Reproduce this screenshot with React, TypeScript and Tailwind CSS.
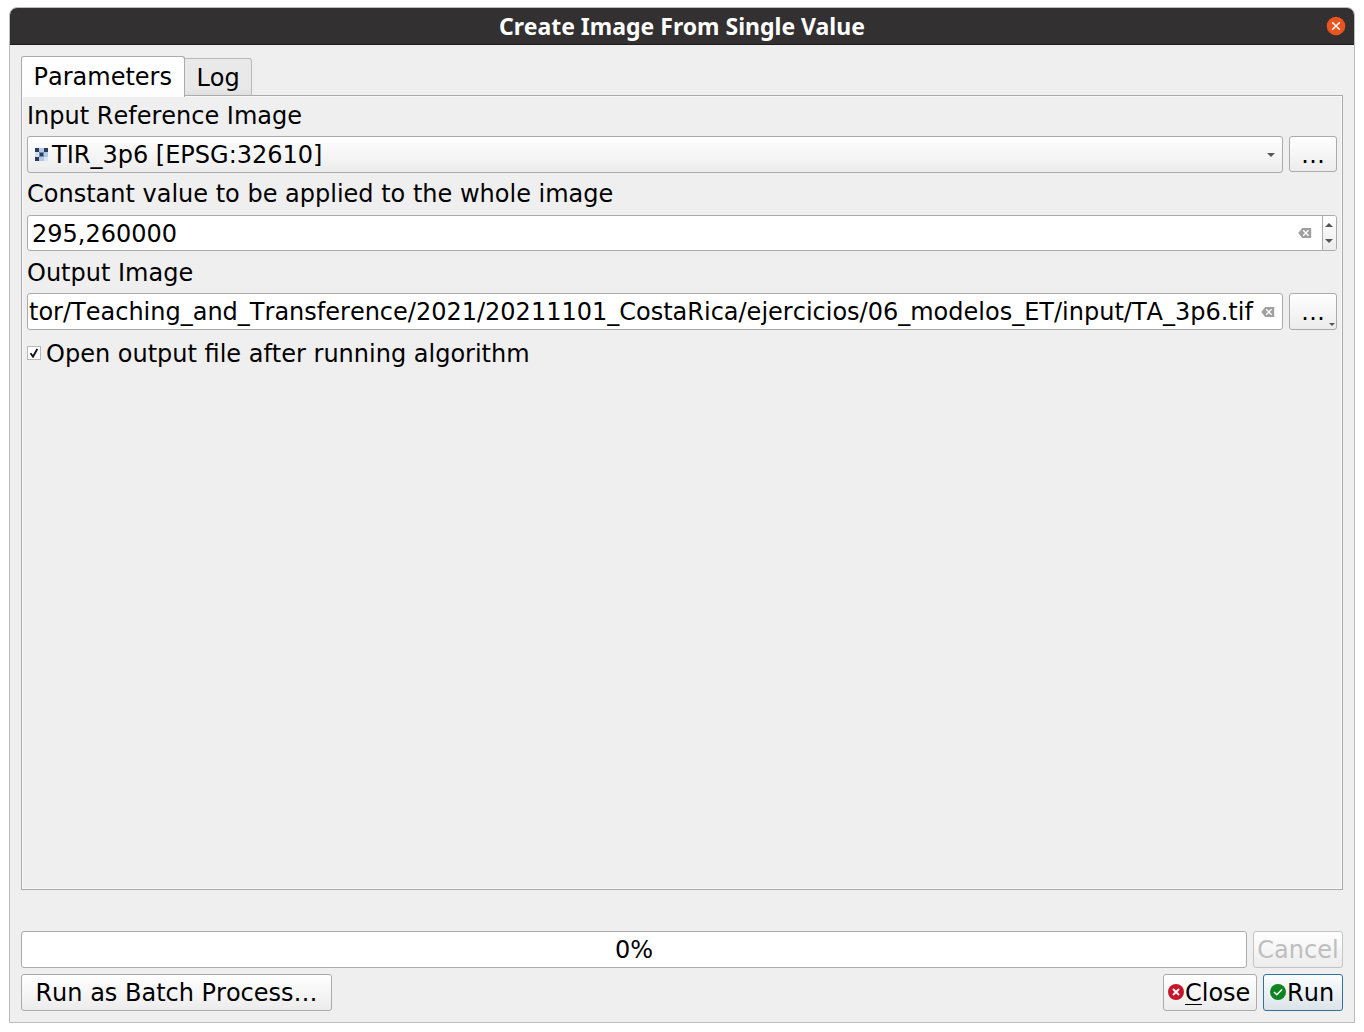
import type { ReactNode } from "react";

const FRAME = "border border-[#a9abac] rounded-[3px]";
const RAISED = "bg-linear-to-b from-white to-[#ececec]";

function Label({ children }: { children: ReactNode }) {
  return <div className="h-7 whitespace-nowrap">{children}</div>;
}

function RasterIcon() {
  return (
    <svg width="13" height="13" viewBox="0 0 13 13" shapeRendering="crispEdges" className="shrink-0">
      <rect width="13" height="13" fill="#b0c9e8" />
      <rect y="4" width="4" height="5" fill="#cfdff3" />
      <rect x="9" y="9" width="4" height="4" fill="#dbe6f4" />
      <path fill="#2b3e54" d="M0 0h4v4H0zM9 0h4v4H9zM0 9h4v4H0zM5 5h3v3H5z" />
      <path fill="#7089a8" d="M4 4h5v1H4zM4 8h5v1H4zM4 5h1v3H4zM8 5h1v3H8z" />
    </svg>
  );
}

function ClearIcon() {
  return (
    <svg width="14" height="10" viewBox="0 0 14 10" className="shrink-0">
      <path d="M4.2 0H13.2V10H4.2L0.2 5Z" fill="#a0a0a0" />
      <path d="M5.2 2.2l5.4 5.6M10.6 2.2L5.2 7.8" stroke="#fff" strokeWidth="1.4" />
    </svg>
  );
}

function Arrow({ up = false, small = false }: { up?: boolean; small?: boolean }) {
  return (
    <svg width={small ? 6 : 8} height={small ? 3 : 4} viewBox="0 0 8 4" className="shrink-0">
      <path d={up ? "M0 4L4 0L8 4Z" : "M0 0H8L4 4Z"} fill="#555" />
    </svg>
  );
}

function Button({ className, children }: { className: string; children: ReactNode }) {
  return (
    <button type="button" className={`flex shrink-0 items-center whitespace-nowrap border rounded-[3px] ${className}`}>
      {children}
    </button>
  );
}

export default function App() {
  return (
    <div className="h-[1032px] w-[1364px] overflow-hidden bg-white pl-[9px] pt-[7px] font-['DejaVu_Sans',sans-serif] text-[24px] leading-7 text-black [font-kerning:none]">
      <div className="flex h-[1016px] w-[1346px] flex-col rounded-t-[8px] border border-[#bcbcbc] bg-[#efefef]">
        <header className="relative flex h-[37px] shrink-0 items-center justify-center rounded-t-[7px] border-b border-[#1c1c1c] bg-[#333031]">
          <h1 className="whitespace-nowrap font-['Noto_Sans',sans-serif] text-[23px] font-bold leading-7 text-white [font-kerning:normal]">
            Create Image From Single Value
          </h1>
          <svg width="20" height="20" viewBox="0 0 20 20" className="absolute right-[8px] top-[8px]">
            <circle cx="10" cy="10" r="9.3" fill="#e95420" />
            <path d="M6.2 6.2l7.6 7.6M13.8 6.2l-7.6 7.6" stroke="#fff" strokeWidth="1.5" />
          </svg>
        </header>

        <div className="flex flex-1 flex-col px-[11px] pt-[11px]">
          <div className="relative z-10 -mb-px flex h-[41px] shrink-0 items-start">
            <div className="h-[41px] w-[164px] rounded-t-[3px] border border-b-0 border-[#a9abac] bg-linear-to-b from-white to-[#fdfdfd] pl-[11.5px] pt-[6px]">
              Parameters
            </div>
            <div className="mt-[2px] h-[38px] w-[67px] rounded-tr-[3px] border border-l-0 border-[#b9b9b9] border-b-[#a9abac] bg-linear-to-b from-[#e9e9e9] from-80% to-[#dfdfdf] pl-[11.5px] pt-[5px]">
              Log
            </div>
          </div>

          <main className="-mt-px h-[795px] shrink-0 border border-[#a9abac] pl-[5px] pr-[5px] shadow-[inset_0_0_0_1px_#f9f9f9]">
            <div className="pt-[6px]">
              <Label>Input Reference Image</Label>
            </div>
            <div className="mt-[6px] flex items-start gap-[6px]">
              <div className={`flex h-[37px] w-[1256px] items-center pl-[7px] pr-[7px] ${FRAME} ${RAISED}`}>
                <RasterIcon />
                <span className="ml-[4px] flex-1">TIR_3p6 [EPSG:32610]</span>
                <Arrow />
              </div>
              <Button className={`h-[36px] w-[48px] justify-center border-[#a9abac] pt-[1px] ${RAISED}`}>…</Button>
            </div>
            <div className="pt-[7px]">
              <Label>Constant value to be applied to the whole image</Label>
            </div>
            <div className={`mt-[7px] flex h-[36px] overflow-hidden bg-white ${FRAME}`}>
              <div className="flex flex-1 items-center pl-[4px] pr-[10px]">
                <span className="flex-1 pt-[2px]">295,260000</span>
                <ClearIcon />
              </div>
              <div className={`flex w-[14px] flex-col items-center justify-between border-l border-[#a9abac] py-[7px] pr-px ${RAISED}`}>
                <Arrow up />
                <Arrow />
              </div>
            </div>
            <div className="pt-[8px]">
              <Label>Output Image</Label>
            </div>
            <div className="mt-[6px] flex gap-[6px]">
              <div className={`flex h-[37px] w-[1256px] items-center justify-between bg-white pl-[1px] pr-[7px] ${FRAME}`}>
                <span className="whitespace-nowrap">
                  tor/Teaching_and_Transference/2021/20211101_CostaRica/ejercicios/06_modelos_ET/input/TA_3p6.tif
                </span>
                <ClearIcon />
              </div>
              <Button className={`relative h-[37px] w-[48px] justify-center border-[#a9abac] ${RAISED}`}>
                …
                <span className="absolute bottom-[3px] right-[1px] flex">
                  <Arrow small />
                </span>
              </Button>
            </div>
            <div className="mt-[9px] flex items-center">
              <span className="flex size-[14px] items-center justify-center border border-[#b8b8b8] bg-white">
                <svg width="10" height="10" viewBox="0 0 10 10">
                  <path d="M1.5 5.2L4 8.6L8.3 1" fill="none" stroke="#111" strokeWidth="1.9" />
                </svg>
              </span>
              <span className="-mb-px ml-[5px] mt-px">Open output file after running algorithm</span>
            </div>
          </main>

          <div className="mt-[41px] flex gap-[6px]">
            <div className={`flex h-[37px] w-[1226px] items-center justify-center bg-white ${FRAME}`}>0%</div>
            <Button className={`h-[37px] w-[90px] justify-center border-[#c3c4c5] text-[#bebebe] ${RAISED}`}>Cancel</Button>
          </div>
          <div className="mt-[6px] flex gap-[6px]">
            <Button className={`h-[37px] w-[311px] justify-center border-[#a9abac] ${RAISED}`}>Run as Batch Process…</Button>
            <Button className={`ml-auto h-[37px] w-[94px] border-[#a9abac] pl-[4px] ${RAISED}`}>
              <svg width="16" height="16" viewBox="0 0 16 16" className="-mt-px mr-[1px] shrink-0">
                <circle cx="8" cy="8" r="8" fill="#c7162b" />
                <path d="M5 5l6 6M11 5l-6 6" stroke="#fff" strokeWidth="1.8" />
              </svg>
              <span>
                <span className="relative after:absolute after:inset-x-0 after:bottom-[2px] after:h-px after:bg-black">C</span>lose
              </span>
            </Button>
            <Button className="h-[37px] w-[80px] border-[#30729c] bg-linear-to-b from-[#fbfdfe] to-[#dbe4ea] pl-[6px]">
              <svg width="16" height="16" viewBox="0 0 16 16" className="-mt-px mr-[1px] shrink-0">
                <circle cx="8" cy="8" r="8" fill="#0e8420" />
                <path d="M4 8l2.8 2.8L12 5.4" fill="none" stroke="#fff" strokeWidth="1.5" />
              </svg>
              Run
            </Button>
          </div>
        </div>
      </div>
    </div>
  );
}
